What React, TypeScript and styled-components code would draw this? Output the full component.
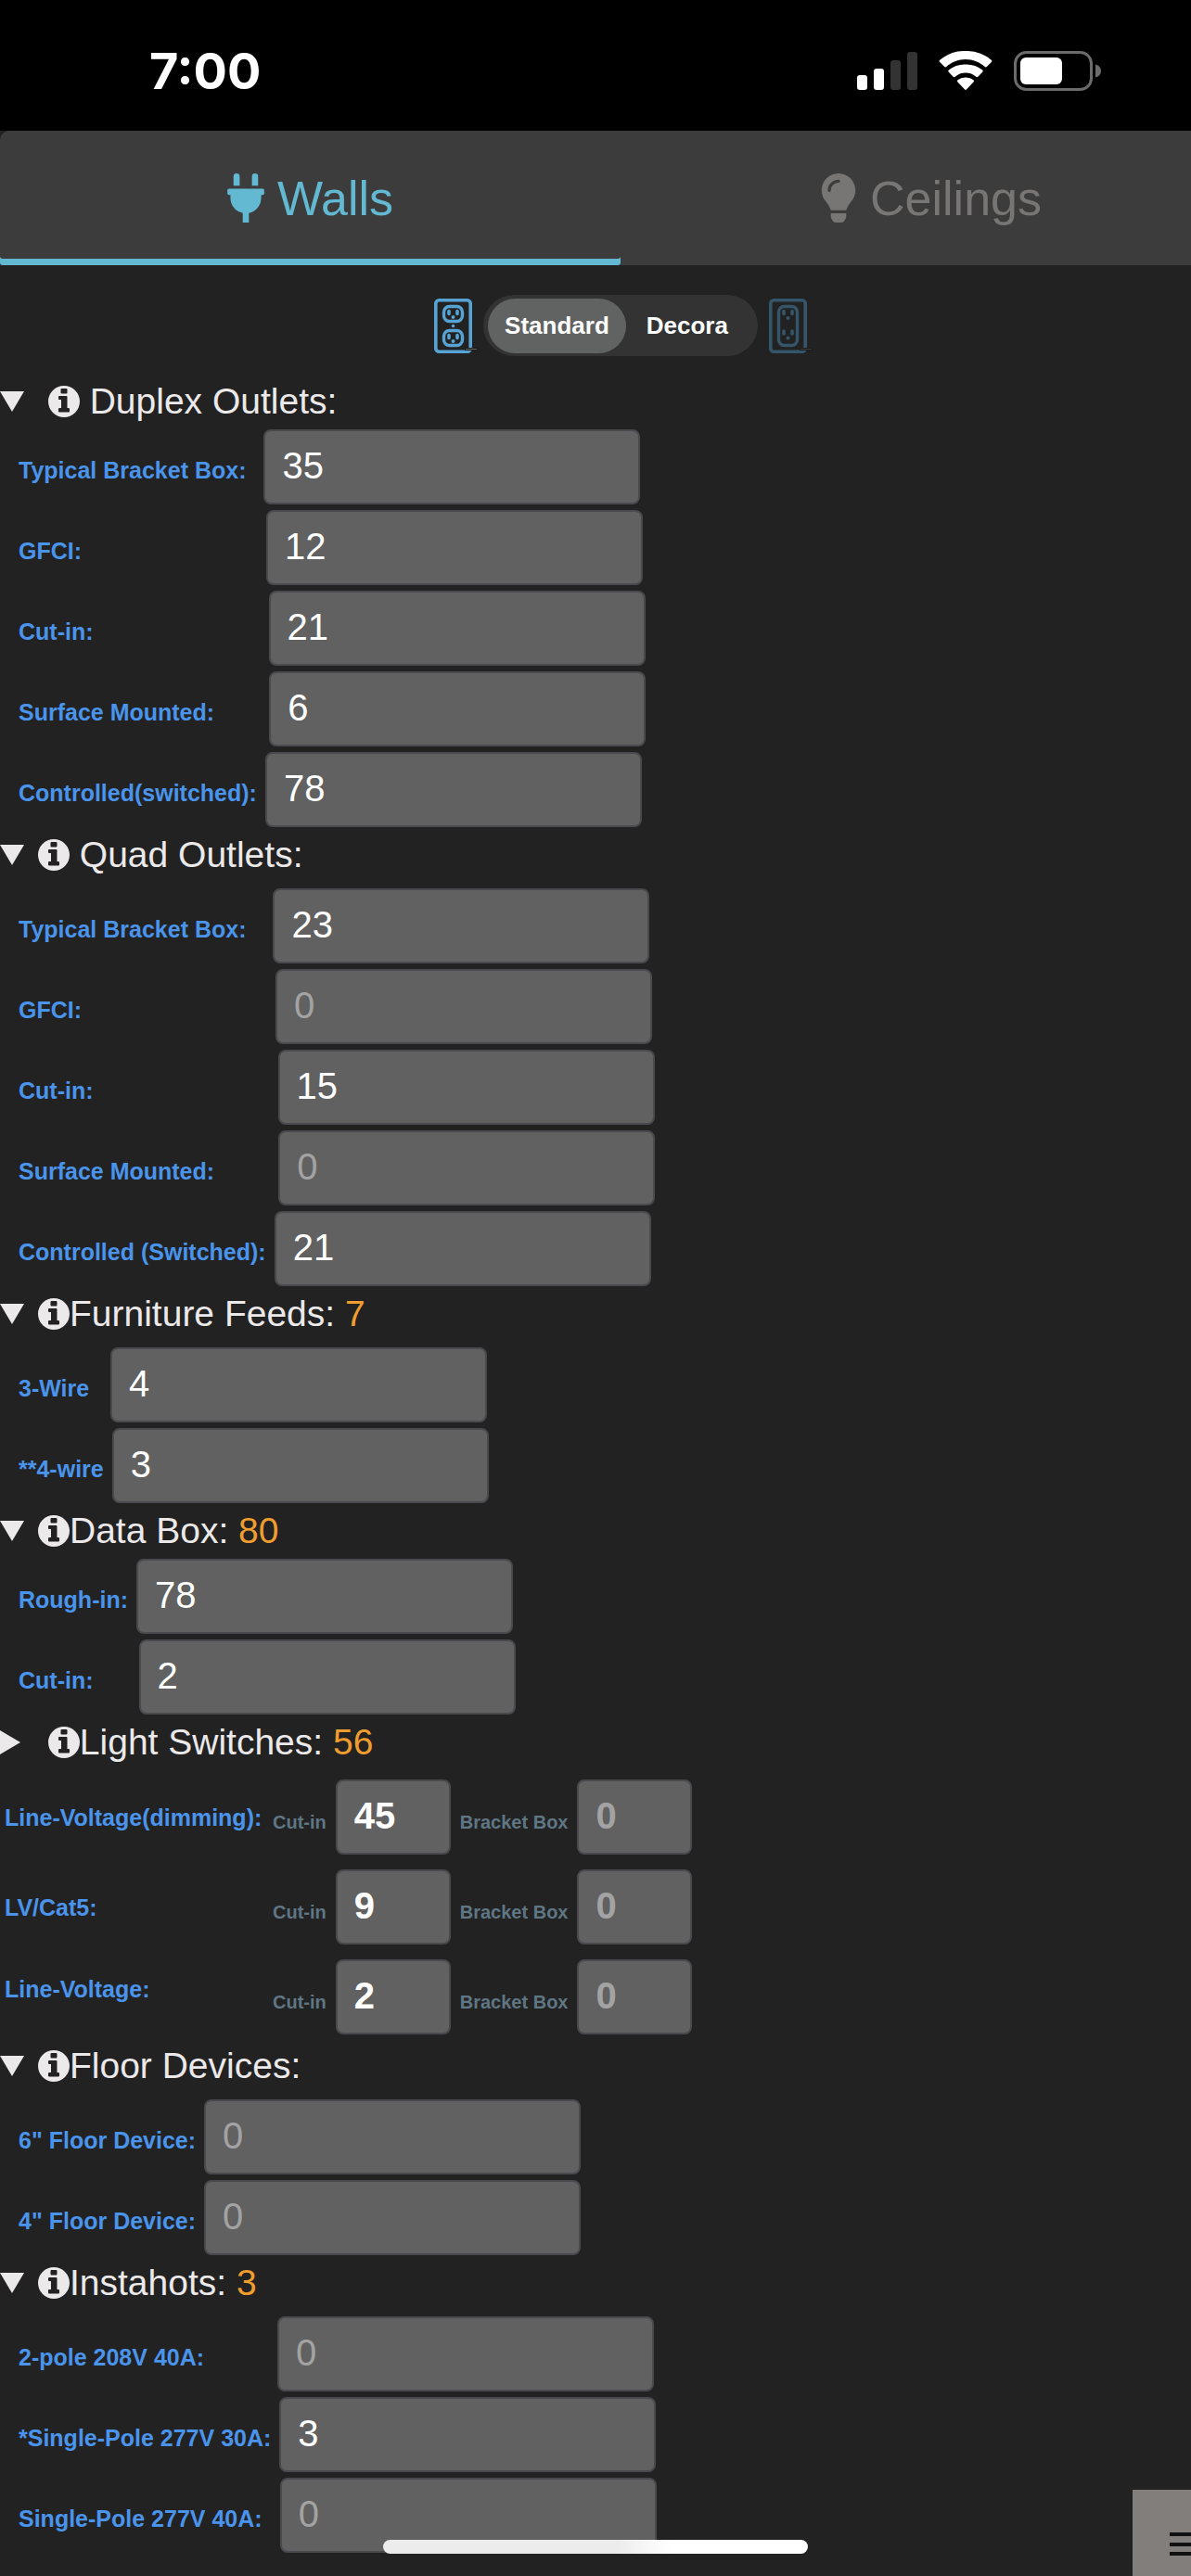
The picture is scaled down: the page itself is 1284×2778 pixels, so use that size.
import React, { useId, useState } from 'react';
import styled, { createGlobalStyle, css } from 'styled-components';
import { FaLightbulb, FaPlug } from 'react-icons/fa';

const color = {
  page: '#222222',
  bar: '#3c3c3c',
  accent: '#63b8d2',
  muted: '#787674',
  heading: '#ece9ea',
  label: '#4a94ec',
  hint: '#5f7684',
  total: '#f09d30',
  field: '#616161',
  fieldEdge: '#4a4a4e',
  placeholder: '#a3a3a3',
};

const GlobalStyle = createGlobalStyle`
  *, *::before, *::after { box-sizing: border-box; }
  html, body { margin: 0; background: ${color.page}; }
  body {
    overflow-x: hidden;
    font-family: "Liberation Sans", Arial, sans-serif;
    color: ${color.heading};
  }
  button, input { font-family: inherit; }
`;

const Page = styled.div`
  min-height: 100vh;
  overflow-x: hidden;
`;

const StatusBar = styled.header`
  display: flex;
  justify-content: space-between;
  align-items: center;
  height: 141px;
  padding: 11px 97px 0 161px;
  background: #000;
  color: #fff;
`;

const Clock = styled.time`
  padding-top: 2px;
  font: 700 54px/60px Inter, sans-serif;
`;

const StatusIcons = styled.div`
  display: flex;
  align-items: center;
  gap: 23px;
`;

/* The tabs and the style switch run a little wider than the screen. */
const WideArea = styled.div`
  width: calc(100% + 54px);
`;

const Tabs = styled.div`
  display: grid;
  grid-template-columns: 1fr 1fr;
  background: ${color.bar};
  border-radius: 10px 0 0 0;
`;

const Tab = styled.button<{ $active: boolean }>`
  display: flex;
  justify-content: center;
  align-items: center;
  gap: 14px;
  height: 145px;
  padding: 0;
  border: 0;
  border-radius: 3px;
  background: none;
  font-size: 52px;
  line-height: 60px;
  color: ${(p) => (p.$active ? color.accent : color.muted)};
  box-shadow: ${(p) => (p.$active ? `inset 0 -7px ${color.accent}` : 'none')};
  svg { height: 53px; width: 40px; }
`;

const StyleSwitch = styled.div`
  display: flex;
  justify-content: center;
  align-items: center;
  gap: 12px;
  padding: 32px 0 19px;
`;

const Segments = styled.div`
  display: flex;
  gap: 4px;
  padding: 4px 14px 3px 5px;
  border-radius: 33px;
  background: #333333;
`;

const Segment = styled.button<{ $active: boolean }>`
  height: 59px;
  padding: 0 18px;
  border: 0;
  border-radius: 30px;
  background: ${(p) => (p.$active ? '#616363' : 'none')};
  color: #fff;
  font-size: 26px;
  font-weight: 700;
`;

const Heading = styled.h2`
  margin: 0;
  padding-top: 7px;
  font-size: 39px;
  font-weight: 400;
  line-height: 46px;
`;

const HeadingButton = styled.button`
  display: flex;
  align-items: center;
  padding: 0;
  border: 0;
  background: none;
  color: inherit;
  font-size: inherit;
  line-height: inherit;
  white-space: pre;
  svg { display: block; }
`;

const MarkerBox = styled.span`
  width: 41px;
`;

const Total = styled.span`
  color: ${color.total};
`;

const Rows = styled.div<{ $roomy: boolean }>`
  display: flex;
  flex-direction: column;
  gap: 6px;
  padding: ${(p) => (p.$roomy ? 13 : 7)}px 0 0 20px;
`;

const Row = styled.div`
  display: flex;
  align-items: baseline;
`;

const labelText = css`
  color: ${color.label};
  font-size: 25px;
  font-weight: 700;
`;

const RowLabel = styled.label`
  ${labelText}
  padding-right: 9px;
  white-space: pre;
`;

const Pad = styled.span`
  font-size: 36px;
  font-weight: 400;
  line-height: 1;
`;

const Field = styled.input<{ $small?: boolean }>`
  width: ${(p) => (p.$small ? 124 : 406)}px;
  height: 81px;
  margin: 0;
  padding: 0 18px 3px;
  border: 2px solid ${color.fieldEdge};
  border-radius: 8px;
  background: ${color.field};
  color: #fff;
  font-size: 40px;
  font-weight: ${(p) => (p.$small ? 700 : 400)};
  outline: none;
  &::placeholder { color: ${color.placeholder}; opacity: 1; }
`;

const SwitchGrid = styled.div`
  display: grid;
  grid-template-columns: 289px auto;
  justify-content: start;
  align-items: center;
  row-gap: 16px;
  padding: 17px 0 4px 5px;
`;

const SwitchLabel = styled.span<{ $top: boolean }>`
  ${labelText}
  align-self: ${(p) => (p.$top ? 'start' : 'center')};
  line-height: 64px;
  white-space: nowrap;
`;

const SwitchFields = styled.div`
  display: flex;
  align-items: baseline;
  gap: 10px;
`;

const Hint = styled.label`
  color: ${color.hint};
  font-size: 20px;
  font-weight: 700;
`;

const HomeIndicator = styled.div`
  position: fixed;
  left: 50%;
  bottom: 24px;
  width: 458px;
  height: 15px;
  margin-left: -229px;
  border-radius: 8px;
  background: linear-gradient(90deg, #ececec 55%, #ffffff 68%);
`;

const MenuButton = styled.button`
  position: fixed;
  right: 0;
  bottom: 0;
  width: 63px;
  height: 93px;
  padding: 0 0 0 40px;
  border: 0;
  background: #827e7c;
  svg { display: block; margin-top: 25px; }
`;

function SignalIcon() {
  return (
    <svg width="65" height="43" aria-hidden="true">
      <rect x="0" y="26" width="11" height="16" rx="3" fill="#fff" />
      <rect x="18" y="19" width="11" height="23" rx="3" fill="#fff" />
      <rect x="36" y="10" width="11" height="32" rx="3" fill="#333" />
      <rect x="54" y="1" width="11" height="41" rx="3" fill="#333" />
    </svg>
  );
}

function WifiIcon() {
  return (
    <svg width="58" height="43" viewBox="0 0 58 43" fill="#fff" aria-hidden="true">
      <path d="M29 9c8 0 15.300 3 20.800 8a1.500 1.500 0 0 0 2 0l5-5a1.500 1.500 0 0 0 0-2.200A41 41 0 0 0 29 0 41 41 0 0 0 1.200 9.800a1.500 1.500 0 0 0 0 2.200l5 5a1.500 1.500 0 0 0 2 0C13.700 12 21 9 29 9z" />
      <path d="M29 23.500c4.300 0 8.200 1.500 11.300 4.200a1.500 1.500 0 0 0 2 0l4.900-4.900a1.500 1.500 0 0 0 0-2.200A27 27 0 0 0 29 14.500a27 27 0 0 0-18.200 6.100 1.500 1.500 0 0 0 0 2.200l4.900 4.900a1.500 1.500 0 0 0 2 0c3.100-2.700 7-4.200 11.300-4.200z" />
      <path d="M37.500 33.500a1.500 1.500 0 0 0 0-2.200A13 13 0 0 0 29 28.500a13 13 0 0 0-8.500 2.800 1.500 1.500 0 0 0 0 2.200l7.400 7.800a1.500 1.500 0 0 0 2.200 0z" />
    </svg>
  );
}

function BatteryIcon() {
  return (
    <svg width="94" height="43" aria-hidden="true">
      <rect x="1.500" y="1.500" width="82" height="40" rx="12" fill="none" stroke="#6b6b6b" strokeWidth="3" />
      <rect x="7" y="7" width="45" height="29" rx="6" fill="#fff" />
      <path d="M88 14.500c4 1 6 4 6 7s-2 6-6 7z" fill="#6b6b6b" />
    </svg>
  );
}

function InfoIcon() {
  return (
    <svg width="34" height="34" viewBox="0 0 34 34" aria-hidden="true">
      <circle cx="17" cy="17" r="17" fill="currentColor" />
      <path
        fill={color.page}
        d="M14.500 3h5a1 1 0 0 1 1 1v3.500a1 1 0 0 1-1 1h-5a1 1 0 0 1-1-1V4a1 1 0 0 1 1-1zM12 11h7.500a1 1 0 0 1 1 1v12H22a1 1 0 0 1 1 1v2.500a1 1 0 0 1-1 1H12a1 1 0 0 1-1-1V25a1 1 0 0 1 1-1h2v-9h-2a1 1 0 0 1-1-1v-2a1 1 0 0 1 1-1z"
      />
    </svg>
  );
}

function Slots({ y, ground }: { y: number; ground: number }) {
  return (
    <g>
      <path d={`M16 ${y - 1.5}v3M25 ${y - 1.5}v3`} stroke="currentColor" strokeWidth="3.600" strokeLinecap="round" />
      <circle cx="20.500" cy={ground} r="2" fill="currentColor" />
    </g>
  );
}

function OutletIcon({ decora }: { decora?: boolean }) {
  return (
    <svg width="41" height="59" viewBox="0 0 41 59" color={decora ? '#35566a' : '#57a3d3'} fill="none" overflow="visible" aria-hidden="true">
      <rect x="1.800" y="1.800" width="37.400" height="55.400" rx="3.500" stroke="currentColor" strokeWidth="3.600" />
      {decora ? (
        <g>
          <rect x="10.500" y="8.500" width="20" height="42" rx="6" stroke="currentColor" strokeWidth="3.400" />
          <Slots y={15} ground={21} />
          <Slots y={36.5} ground={42.5} />
        </g>
      ) : (
        <g>
          <rect x="10.500" y="8.500" width="20" height="16" rx="6" stroke="currentColor" strokeWidth="3.400" />
          <Slots y={15} ground={20} />
          <circle cx="20.500" cy="29.500" r="1.800" fill="currentColor" />
          <rect x="10.500" y="34.500" width="20" height="16" rx="6" stroke="currentColor" strokeWidth="3.400" />
          <Slots y={41} ground={46} />
        </g>
      )}
      <path d="M33 54.500h14" stroke="#1c1c1c" strokeWidth="3" />
      <path d="M34 54.500h12" stroke={decora ? '#3c3c3a' : '#666662'} strokeWidth="1" />
    </svg>
  );
}

function Marker({ open }: { open: boolean }) {
  return (
    <MarkerBox>
      <svg width="26" height="26" fill="currentColor" aria-hidden="true">
        {open ? <path d="M0 2h26L13 24z" /> : <path d="M0 0l22 13L0 26z" />}
      </svg>
    </MarkerBox>
  );
}

type HeadingProps = {
  title: string;
  open: boolean;
  onToggle: () => void;
  total?: number;
  indent?: boolean;
  spaced?: boolean;
};

function SectionHeading({ title, open, onToggle, total, indent, spaced }: HeadingProps) {
  return (
    <Heading>
      <HeadingButton type="button" aria-expanded={open} onClick={onToggle}>
        <Marker open={open} />
        {indent && <span>{' '}</span>}
        <InfoIcon />
        <span>
          {spaced ? ' ' : ''}
          {title}
          {total !== undefined && <Total> {total}</Total>}
        </span>
      </HeadingButton>
    </Heading>
  );
}

/* pad: blank characters between the label and its field */
type Item = { label: string; value?: number; pad?: number };

function CountRow({ label, value, pad = 0 }: Item) {
  const id = useId();
  return (
    <Row>
      <RowLabel htmlFor={id}>
        {label}
        {pad > 0 && <Pad>{'\u00a0'.repeat(pad)}</Pad>}
      </RowLabel>
      <Field id={id} inputMode="numeric" placeholder="0" defaultValue={value} />
    </Row>
  );
}

type SectionProps = {
  title: string;
  items: Item[];
  total?: number;
  indent?: boolean;
  spaced?: boolean;
  roomy?: boolean;
};

function Section({ title, items, total, indent, spaced, roomy = false }: SectionProps) {
  const [open, setOpen] = useState(true);
  return (
    <section>
      <SectionHeading title={title} total={total} indent={indent} spaced={spaced} open={open} onToggle={() => setOpen(!open)} />
      {open && (
        <Rows $roomy={roomy}>
          {items.map((item) => (
            <CountRow key={item.label} {...item} />
          ))}
        </Rows>
      )}
    </section>
  );
}

function SwitchRow({ label, cutIn, top = false }: { label: string; cutIn: number; top?: boolean }) {
  const id = useId();
  return (
    <>
      <SwitchLabel $top={top}>{label}</SwitchLabel>
      <SwitchFields role="group" aria-label={label}>
        <Hint htmlFor={`${id}-cut`}>Cut-in</Hint>
        <Field $small id={`${id}-cut`} inputMode="numeric" placeholder="0" defaultValue={cutIn} />
        <Hint htmlFor={`${id}-box`}>Bracket Box</Hint>
        <Field $small id={`${id}-box`} inputMode="numeric" placeholder="0" />
      </SwitchFields>
    </>
  );
}

function LightSwitches() {
  const [open, setOpen] = useState(false);
  return (
    <section>
      <SectionHeading title="Light Switches:" total={56} indent open={open} onToggle={() => setOpen(!open)} />
      <SwitchGrid>
        <SwitchRow label="Line-Voltage(dimming):" cutIn={45} />
        <SwitchRow label="LV/Cat5:" cutIn={9} />
        <SwitchRow label="Line-Voltage:" cutIn={2} top />
      </SwitchGrid>
    </section>
  );
}

const duplex: Item[] = [
  { label: 'Typical Bracket Box:', value: 35, pad: 1 },
  { label: 'GFCI:', value: 12, pad: 19 },
  { label: 'Cut-in:', value: 21, pad: 18 },
  { label: 'Surface Mounted:', value: 6, pad: 5 },
  { label: 'Controlled(switched):', value: 78 },
];

const quad: Item[] = [
  { label: 'Typical Bracket Box:', value: 23, pad: 2 },
  { label: 'GFCI:', pad: 20 },
  { label: 'Cut-in:', value: 15, pad: 19 },
  { label: 'Surface Mounted:', pad: 6 },
  { label: 'Controlled (Switched):', value: 21 },
];

const furniture: Item[] = [
  { label: '3-Wire\u00a0\u00a0', value: 4 },
  { label: '**4-wire', value: 3 },
];

const dataBox: Item[] = [
  { label: 'Rough-in:', value: 78 },
  { label: 'Cut-in:', value: 2, pad: 4 },
];

const floor: Item[] = [{ label: '6" Floor Device:' }, { label: '4" Floor Device:' }];

const instahots: Item[] = [
  { label: '2-pole 208V 40A:', pad: 7 },
  { label: '*Single-Pole 277V 30A:', value: 3 },
  { label: 'Single-Pole 277V 40A:', pad: 1 },
];

export default function App() {
  const [tab, setTab] = useState('walls');
  const [style, setStyle] = useState('standard');
  return (
    <Page>
      <GlobalStyle />
      <StatusBar>
        <Clock>7:00</Clock>
        <StatusIcons>
          <SignalIcon />
          <WifiIcon />
          <BatteryIcon />
        </StatusIcons>
      </StatusBar>
      <main>
        <WideArea>
          <Tabs role="tablist">
            <Tab type="button" role="tab" aria-selected={tab === 'walls'} $active={tab === 'walls'} onClick={() => setTab('walls')}>
              <FaPlug aria-hidden="true" />
              Walls
            </Tab>
            <Tab type="button" role="tab" aria-selected={tab === 'ceilings'} $active={tab === 'ceilings'} onClick={() => setTab('ceilings')}>
              <FaLightbulb aria-hidden="true" />
              Ceilings
            </Tab>
          </Tabs>
          <StyleSwitch>
            <OutletIcon />
            <Segments>
              <Segment type="button" aria-pressed={style === 'standard'} $active={style === 'standard'} onClick={() => setStyle('standard')}>
                Standard
              </Segment>
              <Segment type="button" aria-pressed={style === 'decora'} $active={style === 'decora'} onClick={() => setStyle('decora')}>
                Decora
              </Segment>
            </Segments>
            <OutletIcon decora />
          </StyleSwitch>
        </WideArea>
        <Section title="Duplex Outlets:" items={duplex} indent spaced />
        <Section title="Quad Outlets:" items={quad} spaced roomy />
        <Section title="Furniture Feeds:" total={7} items={furniture} roomy />
        <Section title="Data Box:" total={80} items={dataBox} />
        <LightSwitches />
        <Section title="Floor Devices:" items={floor} roomy />
        <Section title="Instahots:" total={3} items={instahots} roomy />
      </main>
      <MenuButton type="button" aria-label="Menu">
        <svg width="23" height="26" fill="#111" aria-hidden="true">
          <path d="M0 0h23v4H0zM0 11h23v4H0zM0 21h23v4H0z" />
        </svg>
      </MenuButton>
      <HomeIndicator />
    </Page>
  );
}
